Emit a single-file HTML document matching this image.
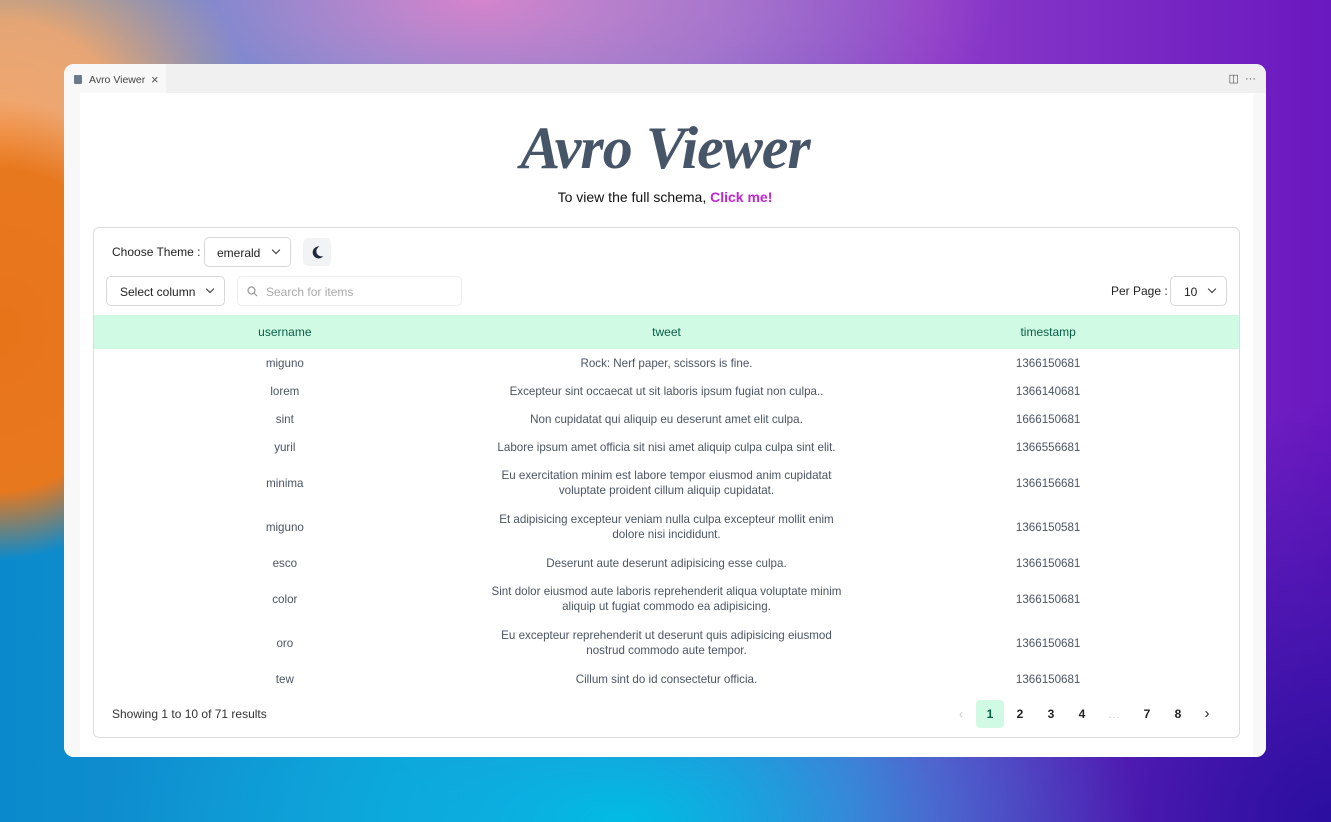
<!DOCTYPE html>
<html><head><meta charset="utf-8"><style>
*{box-sizing:border-box;margin:0;padding:0}
body{width:1331px;height:822px;overflow:hidden;font-family:"Liberation Sans",sans-serif;position:relative;
background:
radial-gradient(ellipse 200px 230px at 0px 330px,#e8741a 0%,#e8781e 70%,rgba(232,120,30,0) 100%),
radial-gradient(ellipse 260px 260px at 0px 150px,#f9a86c 0%,rgba(249,168,108,.9) 50%,rgba(249,168,108,0) 100%),
radial-gradient(ellipse 520px 220px at 480px 0px,#d484cc 0%,rgba(212,132,204,.6) 50%,rgba(212,132,204,0) 100%),
radial-gradient(ellipse 520px 280px at 620px 822px,#00bce4 0%,rgba(0,188,228,0) 100%),
radial-gradient(ellipse 480px 420px at 1331px 822px,#2a0fa0 0%,rgba(42,15,160,0) 100%),
linear-gradient(90deg,#0a8acc 0%,#1a92d2 30%,#8a3ac8 70%,#6a18c0 100%);}
.win{position:absolute;left:64px;top:64px;width:1202px;height:693px;background:#fff;border-radius:10px;overflow:hidden}
.tabbar{height:29px;background:#f0f0f0;position:relative}
.tab{position:absolute;left:0;top:0;width:102px;height:29px;background:#f8f8f8;font-size:10.5px;color:#444;padding:10px 0 0 25px}
.tab:before{content:"";position:absolute;left:10px;top:11px;width:8px;height:9px;background:#6b7b8c;border-radius:1px}
.tab span{position:absolute;left:87px;top:8px;font-size:13px;color:#555}
.ricons{position:absolute;right:10px;top:8px;font-size:11px;color:#555}
.lstrip{position:absolute;left:0;top:29px;width:16px;bottom:0;background:#f8f8f8}
.rstrip{position:absolute;right:0;top:29px;width:13px;bottom:0;background:#f8f8f8}
h1{position:absolute;left:0;width:1202px;top:50px;text-align:center;font-family:"Liberation Serif",serif;font-style:italic;font-weight:bold;font-size:60px;color:#475569;letter-spacing:-1px}
.sub{position:absolute;left:0;width:1202px;top:125px;text-align:center;font-size:14px;color:#111}
.sub b{color:#c026d3}
.card{position:absolute;left:29px;top:163px;width:1147px;height:511px;border:1px solid #ddd;border-radius:6px}
.abs{position:absolute}
.sel{position:absolute;border:1px solid #d8d8d8;border-radius:5px;font-size:12px;color:#222;height:30px;padding-top:8px}
.chev{position:absolute;right:11px;top:9px;width:6px;height:6px;border-right:1.5px solid #333;border-bottom:1.5px solid #333;transform:rotate(45deg)}
table{position:absolute;left:0;top:87px;width:1145px;border-collapse:collapse;font-size:11.6px;color:#4b5563;text-align:center}
th{background:#d1fae5;color:#065f46;font-weight:normal;height:34px;width:33.33%;font-size:12px}
td{height:28px;line-height:15px}
td.d{height:44px}
.pg{position:absolute;top:472px;font-size:12px;color:#222;width:28px;height:28px;text-align:center;line-height:28px;font-weight:bold}
</style></head><body>
<div class="win">
<div class="tabbar"><div class="tab">Avro Viewer<span>×</span></div><div class="ricons">◫ &nbsp;···</div></div>
<div class="lstrip"></div><div class="rstrip"></div>
<h1>Avro Viewer</h1>
<div class="sub">To view the full schema, <b>Click me!</b></div>
<div class="card">
<div class="abs" style="left:18px;top:17px;font-size:12px;color:#222">Choose Theme :</div>
<div class="sel" style="left:110px;top:9px;width:87px;padding-left:12px">emerald<i class="chev"></i></div>
<div class="abs" style="left:209px;top:10px;width:28px;height:28px;background:#f1f3f5;border-radius:5px">
<svg width="28" height="28" viewBox="0 0 28 28"><path d="M16.5 8.5a6 6 0 1 0 4 9.5a5 5 0 0 1-4-9.5z" fill="#1e293b"/></svg></div>
<div class="sel" style="left:12px;top:48px;width:119px;padding-left:13px">Select column<i class="chev"></i></div>
<div class="sel" style="left:143px;top:48px;width:225px;padding-left:28px;color:#aaa;border-color:#eee">Search for items
<svg class="abs" style="left:9px;top:9px" width="11" height="11" viewBox="0 0 11 11"><circle cx="4.5" cy="4.5" r="3.5" fill="none" stroke="#999" stroke-width="1.2"/><path d="M7 7l3 3" stroke="#999" stroke-width="1.2"/></svg></div>
<div class="abs" style="left:1017px;top:56px;font-size:12px;color:#222">Per Page :</div>
<div class="sel" style="left:1076px;top:48px;width:57px;padding-left:13px">10<i class="chev"></i></div>
<table>
<tr><th>username</th><th>tweet</th><th>timestamp</th></tr>
<tr><td>miguno</td><td>Rock: Nerf paper, scissors is fine.</td><td>1366150681</td></tr>
<tr><td>lorem</td><td>Excepteur sint occaecat ut sit laboris ipsum fugiat non culpa..</td><td>1366140681</td></tr>
<tr><td>sint</td><td>Non cupidatat qui aliquip eu deserunt amet elit culpa.</td><td>1666150681</td></tr>
<tr><td>yuril</td><td>Labore ipsum amet officia sit nisi amet aliquip culpa culpa sint elit.</td><td>1366556681</td></tr>
<tr><td class="d">minima</td><td class="d">Eu exercitation minim est labore tempor eiusmod anim cupidatat<br>voluptate proident cillum aliquip cupidatat.</td><td class="d">1366156681</td></tr>
<tr><td class="d">miguno</td><td class="d">Et adipisicing excepteur veniam nulla culpa excepteur mollit enim<br>dolore nisi incididunt.</td><td class="d">1366150581</td></tr>
<tr><td>esco</td><td>Deserunt aute deserunt adipisicing esse culpa.</td><td>1366150681</td></tr>
<tr><td class="d">color</td><td class="d">Sint dolor eiusmod aute laboris reprehenderit aliqua voluptate minim<br>aliquip ut fugiat commodo ea adipisicing.</td><td class="d">1366150681</td></tr>
<tr><td class="d">oro</td><td class="d">Eu excepteur reprehenderit ut deserunt quis adipisicing eiusmod<br>nostrud commodo aute tempor.</td><td class="d">1366150681</td></tr>
<tr><td>tew</td><td>Cillum sint do id consectetur officia.</td><td>1366150681</td></tr>
</table>
<div class="abs" style="left:18px;top:479px;font-size:12px;color:#333">Showing 1 to 10 of 71 results</div>
<div class="pg" style="left:853px;color:#ccc;font-weight:normal">‹</div>
<div class="pg" style="left:882px;background:#d1fae5;border-radius:4px;color:#065f46">1</div>
<div class="pg" style="left:912px">2</div>
<div class="pg" style="left:943px">3</div>
<div class="pg" style="left:974px">4</div>
<div class="pg" style="left:1006px;color:#ccc;font-weight:normal">…</div>
<div class="pg" style="left:1039px">7</div>
<div class="pg" style="left:1070px">8</div>
<div class="pg" style="left:1099px;font-weight:normal;font-size:15px">›</div>
</div>
</div>
</body></html>
